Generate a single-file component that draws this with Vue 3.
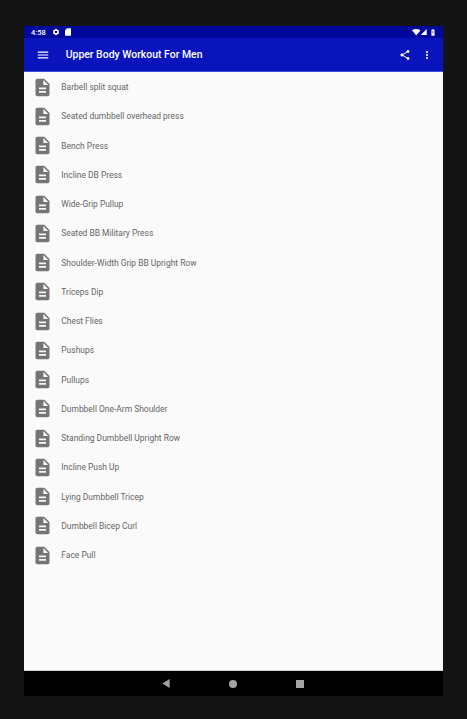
<script setup>
const workouts = [
  'Barbell split squat',
  'Seated dumbbell overhead press',
  'Bench Press',
  'Incline DB Press',
  'Wide-Grip Pullup',
  'Seated BB Military Press',
  'Shoulder-Width Grip BB Upright Row',
  'Triceps Dip',
  'Chest Flies',
  'Pushups',
  'Pullups',
  'Dumbbell One-Arm Shoulder',
  'Standing Dumbbell Upright Row',
  'Incline Push Up',
  'Lying Dumbbell Tricep',
  'Dumbbell Bicep Curl',
  'Face Pull'
]
</script>

<template>
  <div class="page">
    <div class="device">
      <!-- status bar -->
      <div class="status-bar">
        <span class="time">4:58</span>
        <svg class="status-icon" viewBox="0 0 24 24" fill="#fff">
          <path d="M19.14 12.94c.04-.3.06-.61.06-.94 0-.32-.02-.64-.07-.94l2.03-1.58c.18-.14.23-.41.12-.61l-1.92-3.32c-.12-.22-.37-.29-.59-.22l-2.39.96c-.5-.38-1.03-.7-1.62-.94l-.36-2.54c-.04-.24-.24-.41-.48-.41h-3.84c-.24 0-.43.17-.47.41l-.36 2.54c-.59.24-1.13.57-1.62.94l-2.39-.96c-.22-.08-.47 0-.59.22L2.74 8.87c-.12.21-.08.47.12.61l2.03 1.58c-.05.3-.09.63-.09.94s.02.64.07.94l-2.03 1.58c-.18.14-.23.41-.12.61l1.92 3.32c.12.22.37.29.59.22l2.39-.96c.5.38 1.03.7 1.62.94l.36 2.54c.05.24.24.41.48.41h3.84c.24 0 .44-.17.47-.41l.36-2.54c.59-.24 1.13-.56 1.62-.94l2.39.96c.22.08.47 0 .59-.22l1.92-3.32c.12-.22.07-.47-.12-.61l-2.01-1.58zM12 15.6c-1.98 0-3.6-1.62-3.6-3.6s1.62-3.6 3.6-3.6 3.6 1.62 3.6 3.6-1.62 3.6-3.6 3.6z" />
        </svg>
        <svg class="status-icon sd" viewBox="0 0 24 24" fill="#fff">
          <path d="M9 1h10a2 2 0 0 1 2 2v18a2 2 0 0 1-2 2H5a2 2 0 0 1-2-2V7z" />
        </svg>
        <span class="spacer"></span>
        <svg class="wifi" viewBox="0 0 24 18" fill="#fff">
          <path d="M0 3.5C3.5 1 7.5 0 12 0s8.500 1 12 3.5L12 18z" />
        </svg>
        <svg class="signal" viewBox="0 0 16 16" fill="#fff">
          <path d="M16 0v16H0z" />
        </svg>
        <svg class="battery" viewBox="0 0 10 16">
          <path fill="#fff" d="M3 0h4v1.500h2V16H1V1.500h2z" />
          <rect x="3" y="4" width="4" height="6" fill="#8f9fd8" />
        </svg>
      </div>

      <!-- toolbar -->
      <header class="toolbar">
        <svg class="menu" viewBox="0 0 24 24" fill="#fff">
          <path d="M3 18h18v-2H3zm0-5h18v-2H3zm0-7v2h18V6z" />
        </svg>
        <h1 class="title">Upper Body Workout For Men</h1>
        <svg class="action share" viewBox="0 0 24 24" fill="#fff">
          <path d="M18 16.08c-.76 0-1.44.3-1.96.77L8.91 12.7c.05-.23.09-.46.09-.7s-.04-.47-.09-.7l7.05-4.11c.54.5 1.25.81 2.04.81 1.66 0 3-1.34 3-3s-1.34-3-3-3-3 1.34-3 3c0 .24.04.47.09.7L8.04 9.81C7.5 9.31 6.79 9 6 9c-1.66 0-3 1.34-3 3s1.34 3 3 3c.79 0 1.5-.31 2.04-.81l7.12 4.16c-.05.21-.08.43-.08.65 0 1.61 1.31 2.92 2.92 2.92s2.92-1.31 2.92-2.92-1.31-2.92-2.92-2.92z" />
        </svg>
        <svg class="action more" viewBox="0 0 24 24" fill="#fff">
          <path d="M12 8c1.1 0 2-.9 2-2s-.9-2-2-2-2 .9-2 2 .9 2 2 2zm0 2c-1.1 0-2 .9-2 2s.9 2 2 2 2-.9 2-2-.9-2-2-2zm0 6c-1.1 0-2 .9-2 2s.9 2 2 2 2-.9 2-2-.9-2-2-2z" />
        </svg>
      </header>

      <!-- workout list -->
      <ul class="list">
        <li v-for="name in workouts" :key="name" class="row">
          <svg class="doc" viewBox="0 0 24 24" fill="#757575">
            <path d="M14 2H6c-1.1 0-2 .9-2 2v16c0 1.1.9 2 2 2h12c1.1 0 2-.9 2-2V8l-6-6zm2 16H8v-2h8v2zm0-4H8v-2h8v2zm-3-5V3.5L18.5 9H13z" />
          </svg>
          <span class="name">{{ name }}</span>
        </li>
      </ul>

      <!-- nav bar -->
      <nav class="nav-bar">
        <svg class="nav-back" viewBox="0 0 8 10" fill="#a3a3a3">
          <path d="M8 0v10L0 5z" />
        </svg>
        <span class="nav-home"></span>
        <span class="nav-recent"></span>
      </nav>
    </div>
  </div>
</template>

<style>
html,
body {
  margin: 0;
  background: #141414;
}
</style>

<style scoped>
.page {
  width: 467px;
  height: 719px;
  padding: 26px 24px 23px;
  box-sizing: border-box;
  background: #141414;
  font-family: Roboto, "Liberation Sans", sans-serif;
  overflow: hidden;
}

.device {
  height: 670px;
  display: flex;
  flex-direction: column;
  background: #fafafa;
}

.status-bar {
  height: 12px;
  display: flex;
  align-items: center;
  padding: 0 8px 0 7px;
  background: #00089c;
  color: #fff;
  flex-shrink: 0;
}

.time {
  font-size: 7.5px;
  font-weight: 500;
  width: 21px;
}

.status-icon {
  width: 8px;
  height: 8px;
  display: block;
}

.sd {
  margin-left: 4px;
}

.spacer {
  flex: 1;
}

.wifi {
  width: 8.5px;
  height: 6.5px;
}

.signal {
  width: 7px;
  height: 6.5px;
}

.battery {
  width: 4px;
  height: 7px;
  margin-left: 4px;
}

.toolbar {
  height: 34px;
  display: flex;
  align-items: center;
  background: #0a14bd;
  border-bottom: 1px solid #3c4fd6;
  box-sizing: border-box;
  padding-left: 12px;
  flex-shrink: 0;
}

.menu {
  width: 14px;
  height: 14px;
}

.title {
  margin: 0 0 0 15.700px;
  flex: 1;
  font-size: 10.450px;
  font-weight: 500;
  color: #fff;
}

.action {
  width: 12px;
  height: 12px;
}

.share {
  margin-right: 10px;
}

.more {
  margin-right: 10px;
}

.list {
  flex: 1;
  margin: 0;
  padding: 0.4px 0 0;
  list-style: none;
}

.row {
  height: 29.25px;
  display: flex;
  align-items: center;
  padding-left: 8px;
}

.doc {
  width: 21px;
  height: 21px;
  flex-shrink: 0;
}

.name {
  margin-left: 8.3px;
  font-size: 8.45px;
  color: #666;
}

.nav-bar {
  height: 26px;
  display: flex;
  align-items: center;
  background: #000;
  border-top: 1px solid #d0d0d0;
  box-sizing: border-box;
  flex-shrink: 0;
}

.nav-back {
  width: 8px;
  height: 9px;
  margin-left: 138px;
}

.nav-home {
  width: 8px;
  height: 8px;
  border-radius: 50%;
  background: #a3a3a3;
  margin-left: 59px;
}

.nav-recent {
  width: 8px;
  height: 8px;
  background: #a3a3a3;
  margin-left: 59px;
}
</style>
